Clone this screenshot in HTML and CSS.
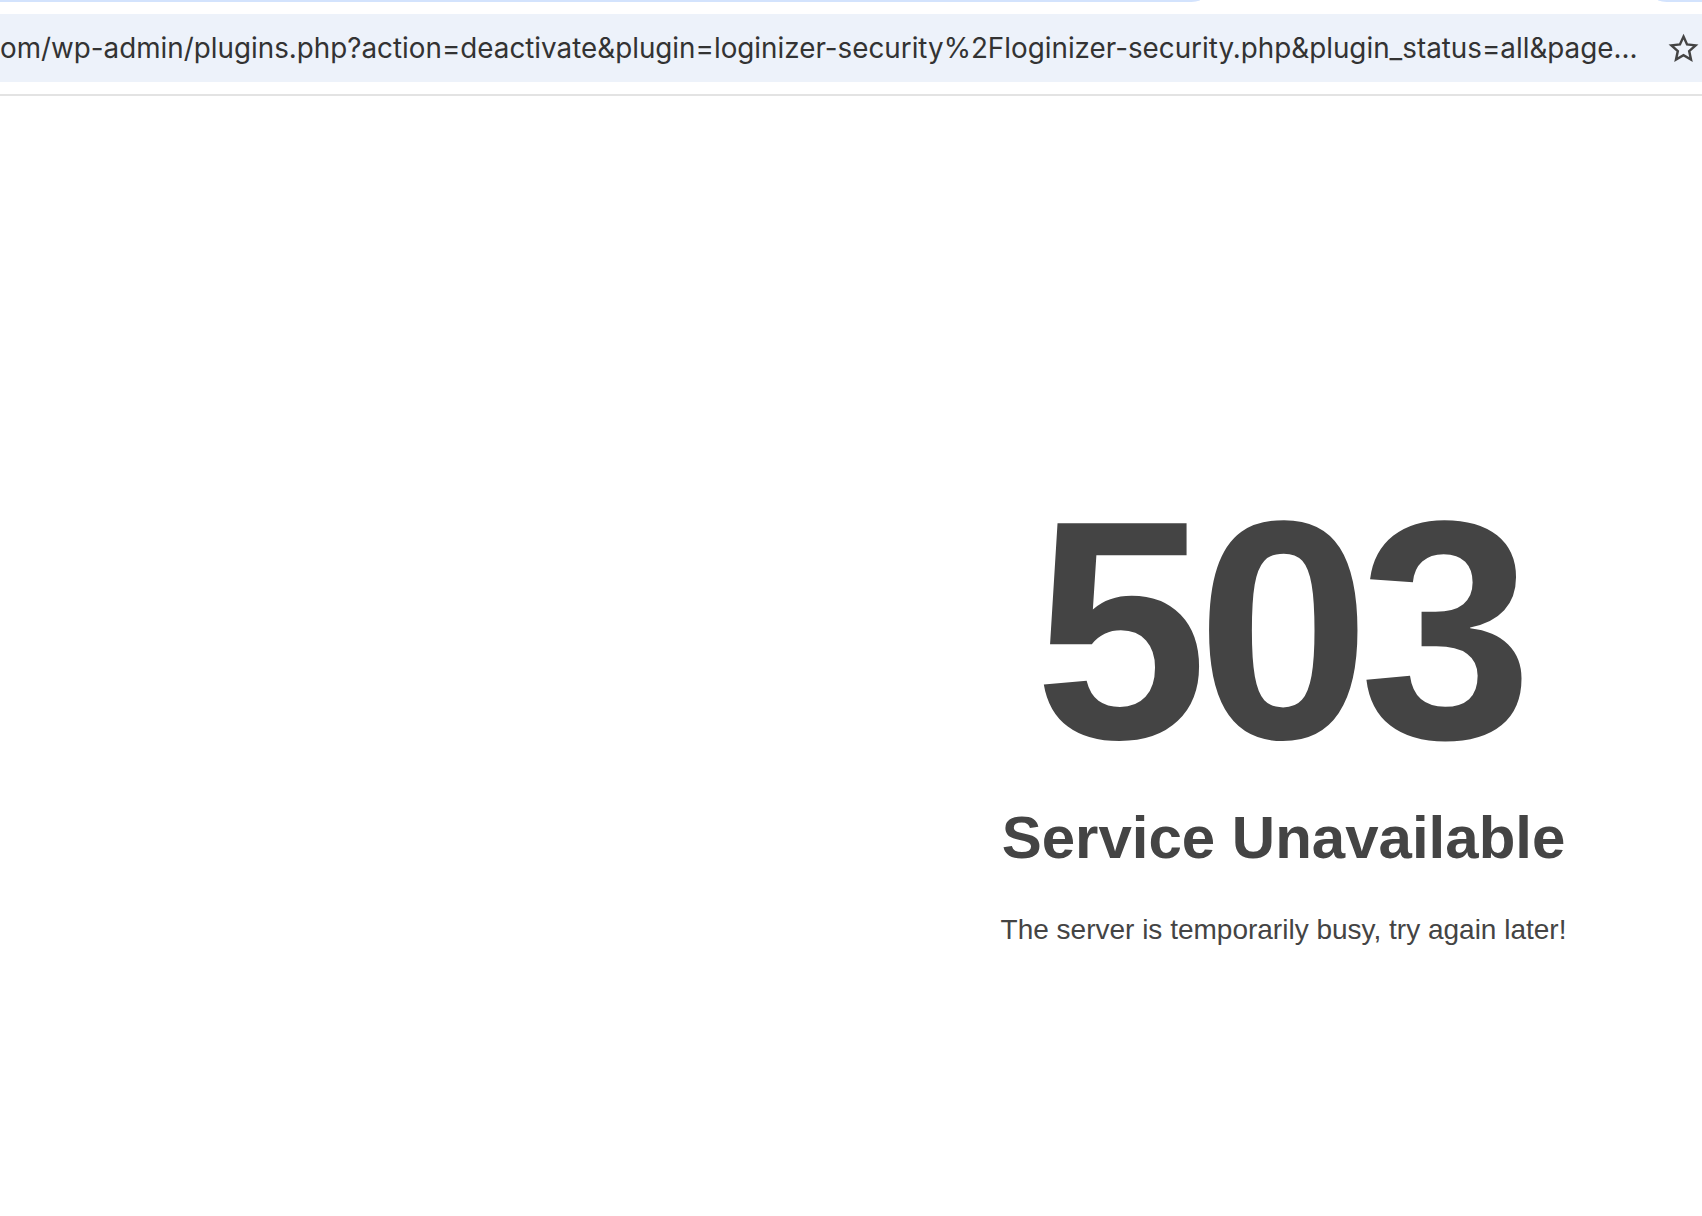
FILE: index.html
```html
<!DOCTYPE html>
<html lang="en">
<head>
<meta charset="utf-8">
<title>503 Service Unavailable</title>
<link rel="stylesheet" href="styles.css">
</head>
<body>
<header class="chrome">
  <div class="tabstrip">
    <div class="tab-edge tab-left"></div>
    <div class="tab-edge tab-right"></div>
  </div>
  <div class="toolbar">
    <div class="omnibox">
      <span class="url">om/wp-admin/plugins.php?action=deactivate&amp;plugin=loginizer-security%2Floginizer-security.php&amp;plugin_status=all&amp;page…</span>
      <svg class="star" viewBox="0 0 24 24" width="31" height="31" aria-hidden="true">
        <path d="M12 2.8l2.75 6.05 6.6.7-4.95 4.45 1.4 6.5L12 17.2l-5.8 3.3 1.4-6.5L2.65 9.55l6.6-.7z" fill="none" stroke="#444" stroke-width="1.9" stroke-linejoin="miter"/>
      </svg>
    </div>
  </div>
  <div class="divider"></div>
</header>
<main class="page">
  <div class="side"></div>
  <section class="message">
    <h1 class="code">503</h1>
    <h2 class="title">Service Unavailable</h2>
    <p class="text">The server is temporarily busy, try again later!</p>
  </section>
</main>
</body>
</html>
```
FILE: styles.css
```css
html, body {
  margin: 0;
  padding: 0;
  background: #ffffff;
}
body {
  width: 1702px;
  height: 1216px;
  overflow: hidden;
  font-family: "Liberation Sans", Arial, sans-serif;
}
.chrome {
  display: flex;
  flex-direction: column;
}
.tabstrip {
  height: 2px;
  display: flex;
  justify-content: space-between;
  background: #ffffff;
}
.tab-edge {
  height: 2px;
  background: #d3e3fd;
}
.tab-left {
  width: 1200px;
  border-bottom-right-radius: 14px 2px;
}
.tab-right {
  width: 44px;
  border-bottom-left-radius: 14px 2px;
}
.toolbar {
  height: 92px;
  display: flex;
  flex-direction: column;
  padding-top: 12px;
  box-sizing: border-box;
}
.omnibox {
  height: 68px;
  background: #edf2fa;
  display: flex;
  align-items: center;
  justify-content: space-between;
}
.url {
  font-family: Inter, "Noto Sans", sans-serif;
  font-size: 27.8px;
  color: #333333;
  white-space: nowrap;
  flex: none;
}
.star {
  flex: none;
  margin-right: 3px;
}
.divider {
  height: 2px;
  background: #e3e3e3;
}
.page {
  display: flex;
}
.side {
  width: 865px;
  flex: none;
}
.message {
  flex: 1 1 auto;
  display: flex;
  flex-direction: column;
  align-items: center;
  color: #444444;
  padding-top: 378px;
}
.code {
  margin: 0;
  font-size: 312px;
  font-weight: 700;
  line-height: 1;
  letter-spacing: -11px;
  padding-right: 11px;
}
.title {
  margin: 16px 0 0;
  font-size: 60px;
  font-weight: 700;
  line-height: 1.2;
}
.text {
  margin: 39px 0 0;
  font-size: 28px;
  line-height: 1.2;
}
```
